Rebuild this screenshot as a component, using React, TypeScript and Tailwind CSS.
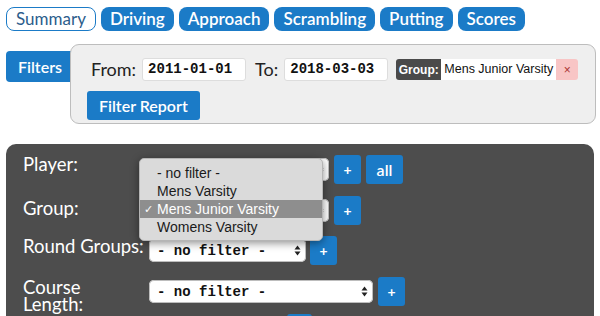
import React from 'react';

const BLUE = 'bg-[#1b7bc7]';

const tabs = ['Driving', 'Approach', 'Scrambling', 'Putting', 'Scores'];

const SelectArrows: React.FC = () => (
  <svg width="7" height="11" viewBox="0 0 7 11" className="shrink-0">
    <path d="M3.5 0.5 L6.5 4.5 L0.5 4.5 Z" fill="#222" />
    <path d="M3.5 10.5 L6.5 6.5 L0.5 6.5 Z" fill="#222" />
  </svg>
);

const FakeSelect: React.FC<{ width: string; text?: string }> = ({ width, text = '- no filter -' }) => (
  <div
    className={`${width} h-[23px] bg-white rounded-[5px] flex items-center justify-between pl-[8px] pr-[5px] shadow-[inset_0_0_0_1px_#bdbdbd]`}
  >
    <span className="text-[14px] text-[#111] font-['Liberation_Mono',monospace] font-bold leading-none">{text}</span>
    <SelectArrows />
  </div>
);

const PlusBtn: React.FC = () => (
  <button className={`${BLUE} w-[27px] h-[29px] rounded-[3px] text-white text-[14px] font-bold leading-none flex items-center justify-center`}>
    +
  </button>
);

const App: React.FC = () => {
  const options = ['- no filter -', 'Mens Varsity', 'Mens Junior Varsity', 'Womens Varsity'];

  return (
    <div className="w-[600px] h-[316px] overflow-hidden bg-white font-['Lato',sans-serif] relative">
      {/* tab bar */}
      <div className="flex gap-[5px] pl-[6px] pt-[7px]">
        <div className="h-[24px] px-[9px] rounded-[8px] border border-[#1b7bc7] text-[#2c5d8c] text-[17px] flex items-center">
          Summary
        </div>
        {tabs.map(t => (
          <div key={t} className={`${BLUE} h-[24px] px-[9px] rounded-[8px] text-white text-[17px] font-semibold flex items-center`}>
            {t}
          </div>
        ))}
      </div>

      {/* filters */}
      <div className="flex items-start pl-[6px] mt-[13px]">
        <div className={`${BLUE} w-[68px] h-[31px] mt-[7px] rounded-l-[4px] text-white text-[16px] font-semibold flex items-center pl-[12px]`}>
          Filters
        </div>
        <div className="relative z-10 -ml-[4px] w-[526px] h-[80px] bg-[#efefef] border border-[#bdbdbd] rounded-[9px] pl-[16px] pt-[13px]">
          <div className="flex items-center h-[23px]">
            <span className="text-[18px] text-[#222] ml-[4px] mr-[6px]">From:</span>
            <div className="w-[104px] h-[23px] bg-white rounded-[3px] border border-[#ddd] pl-[5px] flex items-center text-[14px] font-bold font-['Liberation_Mono',monospace] text-[#111]">
              2011-01-01
            </div>
            <span className="text-[18px] text-[#222] ml-[9px] mr-[6px]">To:</span>
            <div className="w-[104px] h-[23px] bg-white rounded-[3px] border border-[#ddd] pl-[5px] flex items-center text-[14px] font-bold font-['Liberation_Mono',monospace] text-[#111]">
              2018-03-03
            </div>
            <div className="ml-[8px] h-[21px] flex rounded-[3px] overflow-hidden font-['Liberation_Sans',sans-serif]">
              <span className="bg-[#4a4a4a] text-white text-[12px] font-bold w-[45px] flex items-center justify-center">Group:</span>
              <span className="bg-white text-[#111] text-[12.5px] w-[115px] flex items-center justify-center">Mens Junior Varsity</span>
              <span className="bg-[#f8c5c5] text-[#a33] text-[12px] w-[22px] flex items-center justify-center">×</span>
            </div>
          </div>
          <button className={`${BLUE} mt-[10px] h-[29px] px-[12px] rounded-[3px] text-white text-[16px] font-semibold`}>
            Filter Report
          </button>
        </div>
      </div>

      {/* dark panel */}
      <div className="mt-[20px] ml-[6px] w-[588px] h-[200px] bg-[#4d4d4d] rounded-t-[10px] pt-[11px] pl-[17px] text-white text-[18.5px]">
        <div className="flex flex-col">
          <div className="flex items-start h-[29px]">
            <span className="w-[126px] leading-[20px] -mt-[1px]">Player:</span>
            <div className="flex items-center gap-[5px]">
              <FakeSelect width="w-[180px]" text="" />
              <PlusBtn />
              <button className={`${BLUE} w-[37px] h-[29px] rounded-[3px] text-white text-[16px] font-semibold`}>all</button>
            </div>
          </div>

          <div className="flex items-start h-[29px] mt-[12px]">
            <span className="w-[126px] leading-[20px] mt-[2px]">Group:</span>
            <div className="flex items-center gap-[5px]">
              <FakeSelect width="w-[180px]" text="" />
              <PlusBtn />
            </div>
          </div>

          <div className="flex items-start h-[29px] mt-[11px]">
            <span className="w-[126px] leading-[20px] mt-[0px] whitespace-nowrap">Round Groups:</span>
            <div className="flex items-center gap-[4px]">
              <FakeSelect width="w-[157px]" />
              <PlusBtn />
            </div>
          </div>

          <div className="flex items-start h-[29px] mt-[12px]">
            <span className="w-[126px] leading-[17px] mt-[2px]">Course<br />Length:</span>
            <div className="flex items-center gap-[5px]">
              <FakeSelect width="w-[224px]" />
              <PlusBtn />
            </div>
          </div>

          <div className="flex items-start h-[29px] mt-[8px] pl-[264px]">
            <div className={`${BLUE} w-[25px] h-[29px] rounded-[3px]`} />
          </div>
        </div>
      </div>

      {/* open native dropdown over the Player select */}
      <div className="absolute left-[139px] top-[158px] w-[184px] h-[83px] bg-[#dadada] rounded-[5px] shadow-[0_2px_8px_rgba(0,0,0,0.45)] border border-[#b5b5b5] pt-[5px] font-['Liberation_Sans',sans-serif] text-[14px] text-[#1a1a1a] z-20">
        {options.map((o, i) => (
          <div
            key={o}
            className={`h-[18px] flex items-center pl-[17px] relative ${i === 2 ? 'bg-[#8e8e8e] text-white' : ''}`}
          >
            {i === 2 && <span className="absolute left-[4px] text-[11px]">✓</span>}
            {o}
          </div>
        ))}
      </div>
    </div>
  );
};

export default App;
